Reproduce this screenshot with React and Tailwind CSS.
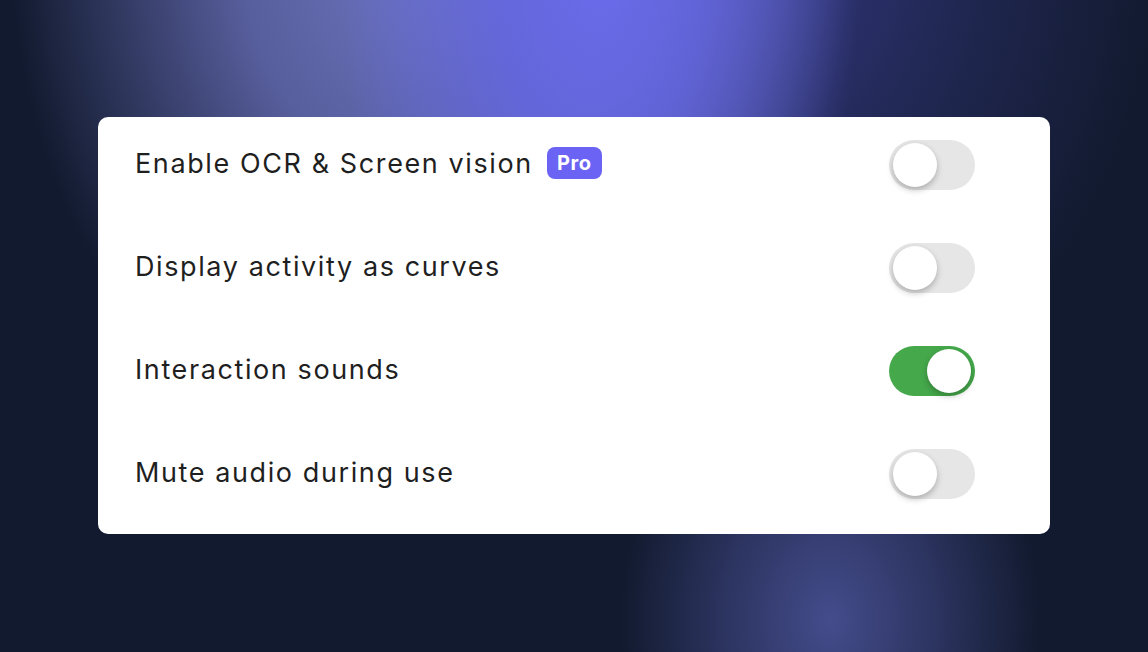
import React from "react";

function Toggle({ on }) {
  return (
    <div
      className={
        "flex h-[50px] w-[86px] shrink-0 items-center rounded-full px-[4px] " +
        (on ? "justify-end bg-[#45a84b]" : "justify-start bg-[#e6e6e6]")
      }
    >
      <div className="h-[44px] w-[44px] rounded-full bg-white shadow-[0_3px_6px_rgba(0,0,0,0.25)]" />
    </div>
  );
}

function Row({ label, on, pro }) {
  return (
    <div className="flex h-[50px] items-center justify-between">
      <div className="flex items-center gap-[14px] pb-[4px]">
        <span className="text-[27px] leading-none tracking-[1.6px] text-[#1f1f1f]">{label}</span>
        {pro && (
          <span className="flex h-[32px] w-[55px] items-center justify-center rounded-[8px] bg-[#6b63f3] text-[20px] font-bold tracking-[0.5px] text-white">
            Pro
          </span>
        )}
      </div>
      <Toggle on={on} />
    </div>
  );
}

export default function App() {
  return (
    <div
      className="flex h-[652px] w-[1148px] items-start justify-center bg-[#121a2f] bg-[radial-gradient(ellipse_260px_560px_at_600px_-60px,rgba(106,108,236,1)_0%,rgba(100,102,225,0.85)_40%,rgba(90,94,200,0)_100%),radial-gradient(ellipse_420px_540px_at_430px_-60px,rgba(110,118,192,1)_0%,rgba(105,112,185,0.8)_45%,rgba(90,98,170,0)_100%),radial-gradient(ellipse_440px_520px_at_720px_-60px,rgba(60,64,150,0.85)_0%,rgba(50,56,125,0.45)_55%,rgba(40,46,100,0)_100%),radial-gradient(ellipse_210px_280px_at_830px_620px,rgba(68,76,140,1)_0%,rgba(62,70,130,0.6)_50%,rgba(60,66,120,0)_100%)] pt-[117px]"
      style={{ fontFamily: "Inter, 'Noto Sans', sans-serif" }}
    >
      <div className="flex h-[417px] w-[952px] flex-col gap-[53px] rounded-[10px] bg-white pl-[37px] pr-[75px] pt-[23px]">
        <Row label="Enable OCR & Screen vision" pro />
        <Row label="Display activity as curves" />
        <Row label="Interaction sounds" on />
        <Row label="Mute audio during use" />
      </div>
    </div>
  );
}
